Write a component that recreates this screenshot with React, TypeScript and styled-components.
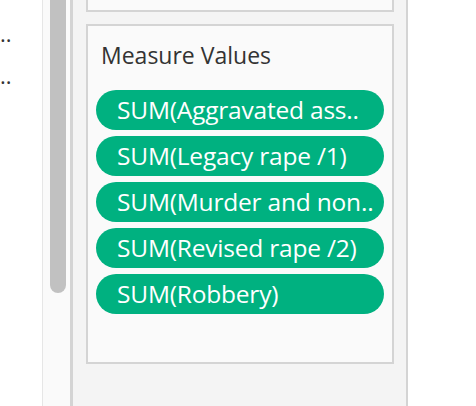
import React from "react";
import styled, { createGlobalStyle } from "styled-components";

const Global = createGlobalStyle`
  html, body { margin: 0; padding: 0; background: #ffffff; }
  body { font-family: "Open Sans", "Noto Sans", sans-serif; overflow: hidden; }
`;

const Screen = styled.div`
  display: flex;
  width: 476px;
  height: 406px;
  background: #ffffff;
  overflow: hidden;
`;

const LeftList = styled.div`
  width: 42px;
  flex: none;
  padding-top: 12px;
  font-size: 22px;
  line-height: 42px;
  color: #333333;
  border-right: 1px solid #e6e6e6;
`;

const ListLine = styled.div`
  height: 42px;
  white-space: nowrap;
`;

const ScrollTrack = styled.div`
  width: 20px;
  flex: none;
  padding-left: 7px;
  background: #fafafa;
  border-right: 3px solid #d4d4d4;
`;

const ScrollThumb = styled.div`
  width: 16px;
  height: 293px;
  background: #c1c1c1;
  border-radius: 0 0 8px 8px;
`;

const Panel = styled.div`
  width: 320px;
  flex: none;
  padding-left: 13px;
  background: #f4f4f4;
  border-right: 2px solid #d4d4d4;
  display: flex;
  flex-direction: column;
  gap: 12px;
`;

const ClippedCard = styled.div`
  width: 304px;
  height: 10px;
  background: #fafafa;
  border: 2px solid #d4d4d4;
  border-top: none;
`;

const Card = styled.div`
  width: 304px;
  height: 336px;
  background: #fafafa;
  border: 2px solid #d4d4d4;
  display: flex;
  flex-direction: column;
`;

const CardTitle = styled.div`
  padding: 16px 0 0 13px;
  height: 26px;
  font-size: 23px;
  line-height: 26px;
  color: #333333;
`;

const PillList = styled.div`
  display: flex;
  flex-direction: column;
  gap: 6px;
  padding: 22px 8px 0 8px;
`;

const Pill = styled.div`
  height: 40px;
  border-radius: 20px;
  background: #00b180;
  color: #ffffff;
  font-size: 24.5px;
  line-height: 39px;
  padding-left: 21px;
  letter-spacing: -0.2px;
  white-space: nowrap;
  overflow: hidden;
`;

const pills = [
  "SUM(Aggravated ass..",
  "SUM(Legacy rape /1)",
  "SUM(Murder and non..",
  "SUM(Revised rape /2)",
  "SUM(Robbery)",
];

export default function App() {
  return (
    <>
      <Global />
      <Screen>
        <LeftList>
          <ListLine>..</ListLine>
          <ListLine>..</ListLine>
        </LeftList>
        <ScrollTrack>
          <ScrollThumb />
        </ScrollTrack>
        <Panel>
          <ClippedCard />
          <Card>
            <CardTitle>Measure Values</CardTitle>
            <PillList>
              {pills.map((p) => (
                <Pill key={p}>{p}</Pill>
              ))}
            </PillList>
          </Card>
        </Panel>
      </Screen>
    </>
  );
}
